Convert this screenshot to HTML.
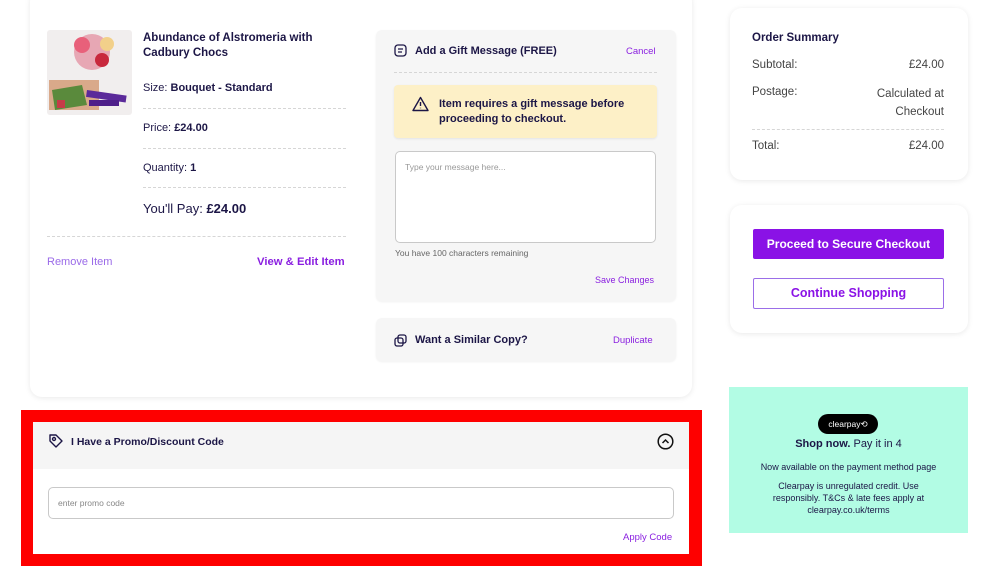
<!DOCTYPE html>
<html><head><meta charset="utf-8"><style>
*{box-sizing:border-box;margin:0;padding:0}
body{width:1000px;height:570px;background:#fff;font-family:"Liberation Sans",sans-serif;color:#1c1646;position:relative;overflow:hidden}
.a{position:absolute}
.card{position:absolute;background:#fff;border-radius:12px;box-shadow:0 1px 6px rgba(0,0,0,.09)}
.dash{position:absolute;border-top:1px dashed #d6d6d6;height:0}
.p{color:#8a1fe0}
b{font-weight:bold}
</style></head><body>
<div class="card" style="left:30px;top:-10px;width:662px;height:407px"></div>
<svg class="a" style="left:47px;top:30px" width="85" height="85"><rect width="85" height="85" rx="3" fill="#f1eeee"/><rect x="2" y="50" width="50" height="30" fill="#d9a98a"/><circle cx="45" cy="22" r="18" fill="#e7a7b4"/><circle cx="35" cy="15" r="8" fill="#e8607a"/><circle cx="55" cy="30" r="7" fill="#c8283d"/><circle cx="60" cy="14" r="7" fill="#f2d08a"/><path d="M5 60 L35 55 L40 75 L8 80Z" fill="#5a8a3c"/><rect x="10" y="70" width="8" height="8" fill="#c63c48"/><rect x="40" y="60" width="40" height="7" fill="#5b2a9a" transform="rotate(8 40 60)"/><rect x="42" y="70" width="30" height="6" fill="#4e1f8a"/></svg>
<div class="a" style="left:143px;top:31px;font-size:11.5px;font-weight:bold;line-height:15px;width:200px">Abundance of Alstromeria with Cadbury Chocs</div>
<div class="a" style="left:143px;top:82px;font-size:11px">Size: <b>Bouquet - Standard</b></div>
<div class="dash" style="left:143px;top:108px;width:203px"></div>
<div class="a" style="left:143px;top:122px;font-size:11px">Price: <b>£24.00</b></div>
<div class="dash" style="left:143px;top:148px;width:203px"></div>
<div class="a" style="left:143px;top:162px;font-size:11px">Quantity: <b>1</b></div>
<div class="dash" style="left:143px;top:187px;width:203px"></div>
<div class="a" style="left:143px;top:201px;font-size:13px">You'll Pay: <b>£24.00</b></div>
<div class="dash" style="left:47px;top:236px;width:299px"></div>
<div class="a" style="left:47px;top:256px;font-size:11px;color:#9a6ae8">Remove Item</div>
<div class="a p" style="left:257px;top:256px;font-size:11.3px;font-weight:bold">View &amp; Edit Item</div>

<div class="a" style="left:376px;top:30px;width:300px;height:271px;background:#f6f6f6;border-radius:6px;box-shadow:0 1px 2px rgba(0,0,0,.06)"></div>
<svg class="a" style="left:394px;top:44px" width="13" height="13" fill="none" stroke="#1c1646" stroke-width="1.3"><rect x="1" y="1" width="11" height="11" rx="3"/><path d="M4 5h5M4 8h4"/></svg>
<div class="a" style="left:415px;top:45px;font-size:11px;font-weight:bold">Add a Gift Message (FREE)</div>
<div class="a p" style="left:626px;top:46px;font-size:9.5px">Cancel</div>
<div class="dash" style="left:394px;top:72px;width:263px"></div>
<div class="a" style="left:394px;top:85px;width:263px;height:53px;background:#fdf0c7;border-radius:4px;box-shadow:0 1px 2px rgba(0,0,0,.08)"></div>
<svg class="a" style="left:412px;top:96px" width="17" height="16" fill="none" stroke="#1c1646" stroke-width="1.4"><path d="M8.5 1.5L16 14.5H1Z" stroke-linejoin="round"/><path d="M8.5 6v4M8.5 11.8v.5"/></svg>
<div class="a" style="left:439px;top:97px;font-size:11px;font-weight:bold;line-height:15px;width:210px">Item requires a gift message before proceeding to checkout.</div>
<div class="a" style="left:395px;top:151px;width:261px;height:92px;background:#fff;border:1.5px solid #c9c9c9;border-radius:5px"></div>
<div class="a" style="left:405px;top:162px;font-size:8.5px;color:#999">Type your message here...</div>
<div class="a" style="left:395px;top:248px;font-size:8.5px;color:#666">You have 100 characters remaining</div>
<div class="a p" style="left:595px;top:275px;font-size:9px">Save Changes</div>

<div class="a" style="left:376px;top:318px;width:300px;height:43px;background:#f6f6f6;border-radius:6px;box-shadow:0 1px 2px rgba(0,0,0,.06)"></div>
<svg class="a" style="left:394px;top:334px" width="13" height="13" fill="none" stroke="#1c1646" stroke-width="1.3"><rect x="1" y="4" width="8" height="8" rx="2"/><rect x="4" y="1" width="8" height="8" rx="2"/></svg>
<div class="a" style="left:415px;top:334px;font-size:11px;font-weight:bold">Want a Similar Copy?</div>
<div class="a p" style="left:613px;top:335px;font-size:9.5px">Duplicate</div>

<div class="card" style="left:730px;top:8px;width:238px;height:172px"></div>
<div class="a" style="left:752px;top:32px;font-size:11.5px;font-weight:bold">Order Summary</div>
<div class="a" style="left:752px;top:59px;font-size:11.5px;color:#444">Subtotal:</div>
<div class="a" style="left:852px;top:59px;width:92px;text-align:right;font-size:11.5px;color:#444">£24.00</div>
<div class="a" style="left:752px;top:86px;font-size:11.5px;color:#444">Postage:</div>
<div class="a" style="left:844px;top:85px;width:100px;text-align:right;font-size:11.5px;color:#444;line-height:18px">Calculated at Checkout</div>
<div class="dash" style="left:752px;top:129px;width:192px"></div>
<div class="a" style="left:752px;top:140px;font-size:11.5px;color:#444">Total:</div>
<div class="a" style="left:852px;top:140px;width:92px;text-align:right;font-size:11.5px;color:#444">£24.00</div>

<div class="card" style="left:730px;top:205px;width:238px;height:128px"></div>
<div class="a" style="left:753px;top:229px;width:191px;height:30px;background:#8a12e6;border-radius:2px;color:#fff;font-size:12px;font-weight:bold;text-align:center;line-height:30px">Proceed to Secure Checkout</div>
<div class="a" style="left:753px;top:278px;width:191px;height:31px;border:1px solid #9b6ee8;border-radius:2px;color:#8a12e6;font-size:12.5px;font-weight:bold;text-align:center;line-height:29px">Continue Shopping</div>

<div class="a" style="left:729px;top:387px;width:239px;height:146px;background:#b2fce4"></div>
<div class="a" style="left:818px;top:414px;width:60px;height:20px;background:#000;border-radius:10px;color:#fff;font-size:8.5px;text-align:center;line-height:20px">clearpay⟲</div>
<div class="a" style="left:729px;top:438px;width:239px;text-align:center;font-size:11px"><b>Shop now.</b> Pay it in 4</div>
<div class="a" style="left:729px;top:462px;width:239px;text-align:center;font-size:9px">Now available on the payment method page</div>
<div class="a" style="left:755px;top:480px;width:187px;text-align:center;font-size:9px;line-height:12px">Clearpay is unregulated credit. Use responsibly. T&amp;Cs &amp; late fees apply at clearpay.co.uk/terms</div>

<div class="a" style="left:21px;top:410px;width:681px;height:156px;background:#fe0000"></div>
<div class="a" style="left:33px;top:422px;width:656px;height:132px;background:#fff"></div>
<div class="a" style="left:33px;top:422px;width:656px;height:47px;background:#f5f5f5"></div>
<svg class="a" style="left:48px;top:433px" width="15" height="16" fill="none" stroke="#1c1646" stroke-width="1.4"><path d="M2 2h6l6 6-6 6-6-6z" stroke-linejoin="round"/><circle cx="6" cy="6" r="1.5"/></svg>
<div class="a" style="left:71px;top:436px;font-size:10.5px;font-weight:bold">I Have a Promo/Discount Code</div>
<svg class="a" style="left:657px;top:433px" width="17" height="17" fill="none" stroke="#111" stroke-width="1.5"><circle cx="8.5" cy="8.5" r="7.3"/><path d="M5.5 10l3-3 3 3"/></svg>
<div class="a" style="left:48px;top:487px;width:626px;height:32px;border:1.5px solid #c9c9c9;border-radius:5px"></div>
<div class="a" style="left:58px;top:498px;font-size:8.5px;color:#888">enter promo code</div>
<div class="a p" style="left:623px;top:532px;font-size:9.5px">Apply Code</div>
</body></html>
